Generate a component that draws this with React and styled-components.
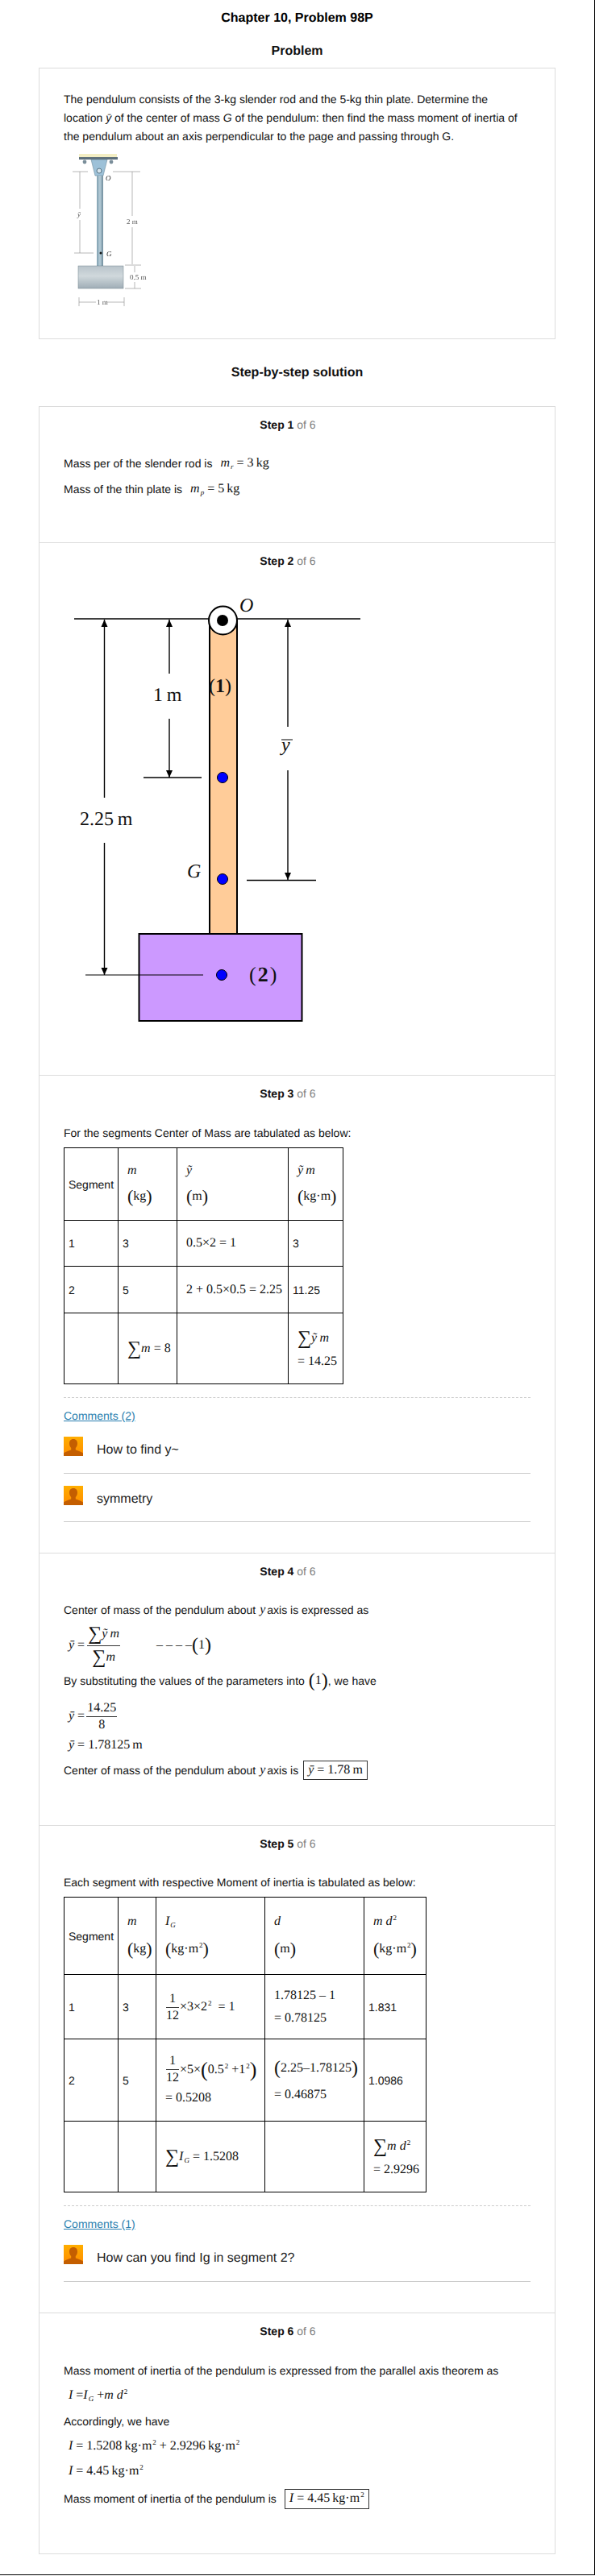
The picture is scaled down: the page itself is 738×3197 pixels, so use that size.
import React from 'react';
import styled, { createGlobalStyle } from 'styled-components';

const Global = createGlobalStyle`
  html, body { margin: 0; padding: 0; background: #fff; }
  body {
    font-family: "Liberation Sans", Arial, sans-serif;
    color: #111;
    text-rendering: geometricPrecision;
  }
`;

const Page = styled.div`
  box-sizing: border-box;
  width: 738px;
  height: 3196px;
  padding-top: 13px;
  border-right: 1px solid #000;
  border-bottom: 1px solid #000;
`;

const Title = styled.h1`
  margin: 0 0 21px;
  font-size: 16px;
  line-height: 20px;
  font-weight: 700;
  text-align: center;
  color: #000;
`;

const Heading = styled.h2`
  margin: ${p => p.$top || 0}px 0 ${p => p.$bottom || 0}px;
  font-size: 16px;
  line-height: 20px;
  font-weight: 700;
  text-align: center;
  color: #111;
`;

const Card = styled.section`
  box-sizing: border-box;
  width: 641px;
  margin-left: 48px;
  border: 1px solid #dcdcdc;
`;

const ProblemBody = styled.div`
  height: 335px;
  box-sizing: border-box;
  padding: 27px 30px 0;
  font-size: 14px;
  line-height: 23px;
  white-space: nowrap;
`;

const ProblemFigure = styled.svg`
  display: block;
  width: 100px;
  height: 200px;
  margin: 9px 0 0 9px;
  filter: blur(0.35px);
`;

const Step = styled.article`
  box-sizing: border-box;
  height: ${p => p.$h}px;
  padding-top: 12px;
  border-top: ${p => (p.$first ? 'none' : '1px solid #dcdcdc')};
`;

const StepLabel = styled.div`
  height: 20px;
  margin-bottom: 20px;
  padding-right: 23px;
  font-size: 14px;
  line-height: 20px;
  text-align: center;
  font-weight: 700;
  color: #111;

  span { font-weight: 400; color: #808080; }
`;

const StepBody = styled.div`
  padding-left: 30px;
  width: 579px;
`;

const Line = styled.div`
  display: flex;
  align-items: center;
  height: ${p => p.$h}px;
  font-size: 14px;
  white-space: pre;
`;

const M = styled.span`
  display: inline-flex;
  align-items: center;
  font-family: "Liberation Serif", "Times New Roman", serif;
  font-size: ${p => p.$size || 16}px;
  white-space: nowrap;
  margin-left: ${p => p.$left || 0}px;
  margin-right: ${p => p.$right || 0}px;
  color: #111;

  i { font-style: italic; }
`;

const Sup = styled.span`
  font-size: 9px;
  position: relative;
  top: -5px;
  margin-left: 1px;
`;

const Sub = styled.span`
  font-size: 9px;
  font-style: italic;
  position: relative;
  top: 4px;
  margin-left: 1px;
`;

const Big = styled.span`
  font-size: ${p => p.$size || 22}px;
  font-weight: 400;
  line-height: 1;
`;

const Frac = styled.span`
  display: inline-flex;
  flex-direction: column;
  align-items: center;
  margin: 0 ${p => p.$gap || 1}px;
  line-height: 1;
`;

const Num = styled.span`
  display: flex;
  align-items: center;
  justify-content: center;
  align-self: stretch;
  padding: 0 1px 2px;
  border-bottom: 1px solid #333;
`;

const Den = styled.span`
  display: flex;
  align-items: center;
  justify-content: center;
  padding-top: 2px;
`;

const Boxed = styled.span`
  display: inline-flex;
  align-items: center;
  height: ${p => p.$h}px;
  padding: 0 5px;
  margin-left: ${p => p.$left || 0}px;
  border: 1px solid #333;
  box-sizing: border-box;
`;

const Table = styled.table`
  border-collapse: collapse;
  table-layout: fixed;
  width: ${p => p.$w}px;
`;

const Td = styled.td`
  box-sizing: border-box;
  height: ${p => p.$h}px;
  width: ${p => p.$w}px;
  padding: 0 0 0 ${p => (p.$math ? 11 : 5)}px;
  border: 1px solid #000;
  font-size: 14px;
  vertical-align: middle;
  white-space: nowrap;
`;

const Stack = styled.div`
  display: flex;
  flex-direction: column;
  align-items: flex-start;
  gap: ${p => p.$gap || 10}px;
`;

const Dashed = styled.div`
  margin-top: 16px;
  border-top: 1px dashed #ccc;
`;

const CommentsLink = styled.a`
  display: block;
  margin-top: 12px;
  font-size: 14px;
  line-height: 20px;
  color: #2a7fb0;
  text-decoration: underline;
`;

const Comment = styled.div`
  display: flex;
  align-items: flex-start;
  gap: 17px;
  height: 62px;
  box-sizing: border-box;
  padding-top: 16px;
  border-bottom: 1px solid #ccc;
  font-size: 16px;
  color: #222;

  & + & { height: 60px; padding-top: 15px; }

  p { margin: 5px 0 0; line-height: 23px; }
`;

const Avatar = () => (
  <svg width="24" height="24" viewBox="0 0 24 24" style={{ flex: 'none', display: 'block' }}>
    <defs>
      <linearGradient id="av" x1="0" y1="0" x2="0" y2="1">
        <stop offset="0" stopColor="#ffae00" />
        <stop offset="1" stopColor="#ff8c00" />
      </linearGradient>
    </defs>
    <rect width="24" height="24" fill="url(#av)" />
    <path d="M12 3c3.4 0 5 2.4 5 5.4 0 2.4-1 4.4-2.2 5.6v2.6c2.8 1.2 7.2 2 9.2 3.9V24H0v-3.5c2-1.9 6.4-2.7 9.2-3.9V14C8 12.8 7 10.8 7 8.4 7 5.4 8.6 3 12 3z" fill="#c45e00" />
  </svg>
);

const Frame = styled.svg`
  display: block;
  width: 380px;
  height: 560px;

  text { font-family: "Liberation Serif", "Times New Roman", serif; fill: #111; }
`;

const Arrow = ({ x, y1, y2, gapA, gapB }) => (
  <g stroke="#000" strokeWidth="1.4">
    <line x1={x} y1={y1} x2={x} y2={gapA} />
    <line x1={x} y1={gapB} x2={x} y2={y2} />
    <polygon points={`${x},${y1} ${x - 4},${y1 + 9} ${x + 4},${y1 + 9}`} fill="#000" stroke="none" />
    <polygon points={`${x},${y2} ${x - 4},${y2 - 9} ${x + 4},${y2 - 9}`} fill="#000" stroke="none" />
  </g>
);

const PendulumDiagram = () => (
  <Frame viewBox="79 726 380 560">
    <line x1="92" y1="768" x2="447" y2="768" stroke="#000" strokeWidth="1.5" />
    <rect x="260" y="770" width="34" height="389" fill="#ffcc99" stroke="#000" strokeWidth="2" />
    <rect x="172.5" y="1159" width="202" height="108" fill="#cc99ff" stroke="#000" strokeWidth="2" />
    <circle cx="276.5" cy="770" r="17.5" fill="#fff" stroke="#000" strokeWidth="2" />
    <circle cx="276" cy="770" r="7" fill="#000" />
    <circle cx="276" cy="965" r="6.5" fill="#0000ff" stroke="#000" />
    <circle cx="276" cy="1091" r="6.5" fill="#0000ff" stroke="#000" />
    <circle cx="275" cy="1210" r="6.5" fill="#0000ff" stroke="#000" />
    <Arrow x={129.5} y1={769} y2={1210} gapA={990} gapB={1046} />
    <Arrow x={210} y1={769} y2={965} gapA={836} gapB={892} />
    <Arrow x={357} y1={769} y2={1092} gapA={902} gapB={956} />
    <line x1="106" y1="1210" x2="252" y2="1210" stroke="#000" strokeWidth="1.2" />
    <line x1="178" y1="965" x2="250" y2="965" stroke="#000" strokeWidth="1.5" />
    <line x1="306" y1="1092.5" x2="392" y2="1092.5" stroke="#000" strokeWidth="1.5" />
    <text x="99" y="1024" fontSize="24">2.25&#8201;m</text>
    <text x="190" y="870" fontSize="24">1&#8201;m</text>
    <text x="349" y="932" fontSize="24" fontStyle="italic">y</text>
    <line x1="349" y1="918" x2="363" y2="918" stroke="#000" />
    <text x="297" y="759" fontSize="24" fontStyle="italic">O</text>
    <text x="232" y="1089" fontSize="24" fontStyle="italic">G</text>
    <text x="259" y="859" fontSize="24">(<tspan fontWeight="700">1</tspan>)</text>
    <text x="309" y="1218" fontSize="26" letterSpacing="2">(<tspan fontWeight="700">2</tspan>)</text>
  </Frame>
);

const FigureProblem = () => (
  <ProblemFigure viewBox="88 190 100 200">
    <defs>
      <linearGradient id="rod" x1="0" y1="0" x2="1" y2="0">
        <stop offset="0" stopColor="#7f9fb0" />
        <stop offset="0.5" stopColor="#b6cdd8" />
        <stop offset="1" stopColor="#6f8c9c" />
      </linearGradient>
      <linearGradient id="plate" x1="0" y1="0" x2="0" y2="1">
        <stop offset="0" stopColor="#b9c4cb" />
        <stop offset="0.45" stopColor="#d0d8dc" />
        <stop offset="1" stopColor="#9fadb6" />
      </linearGradient>
    </defs>
    <rect x="98" y="191" width="47" height="4" fill="#f3eec4" />
    <rect x="98" y="195" width="48" height="3" fill="#5d6f7b" />
    <circle cx="105" cy="201" r="2.4" fill="#7a8e9a" />
    <circle cx="138" cy="201" r="2.4" fill="#7a8e9a" />
    <path d="M113 198h20l-5 20h-10z" fill="#9dc1d8" stroke="#6f8c9c" strokeWidth="0.6" />
    <circle cx="123" cy="212" r="3" fill="#d8e6ee" stroke="#55707f" />
    <rect x="120" y="218" width="8" height="112" fill="url(#rod)" />
    <rect x="97" y="330" width="56" height="28" fill="url(#plate)" stroke="#76868f" strokeWidth="0.5" />
    <g stroke="#888" strokeWidth="0.6" fill="none">
      <path d="M90 213h19M92 314h24M140 213h34M155 329h20M155 358h20" />
      <path d="M99 213v46M99 273v41M164 213v55M164 282v46M167 330v8M167 350v8" />
      <path d="M98 369v11M154 369v11M98 375h21M133 375h21" />
    </g>
    <circle cx="125" cy="314" r="1.5" fill="#111" />
    <g fontFamily="'Liberation Serif', serif" fontSize="9" fill="#555">
      <text x="96" y="269" fontStyle="italic">ȳ</text>
      <text x="157" y="278">2 m</text>
      <text x="161" y="347">0.5 m</text>
      <text x="120" y="378">1 m</text>
      <text x="131" y="224" fontStyle="italic" fill="#333">O</text>
      <text x="132" y="318" fontStyle="italic" fill="#333">G</text>
    </g>
  </ProblemFigure>
);

const Sigma = ({ size }) => <Big $size={size || 24}>∑</Big>;

const App = () => (
  <Page>
    <Global />
    <Title>Chapter 10, Problem 98P</Title>
    <Heading $bottom={10}>Problem</Heading>
    <Card>
      <ProblemBody>
        The pendulum consists of the 3-kg slender rod and the 5-kg thin plate. Determine the<br />
        location <em>ȳ</em> of the center of mass <em>G</em> of the pendulum: then find the mass moment of inertia of<br />
        the pendulum about an axis perpendicular to the page and passing through G.
        <FigureProblem />
      </ProblemBody>
    </Card>
    <Heading $top={32} $bottom={31}>Step-by-step solution</Heading>
    <Card>
      <Step $first $h={168}>
        <StepLabel>Step 1 <span>of 6</span></StepLabel>
        <StepBody>
          <Line $h={36}>Mass per of the slender rod is<M $left={10}><i>m</i><Sub>r</Sub>&nbsp;= 3&#8201;kg</M></Line>
          <Line $h={28}>Mass of the thin plate is<M $left={10}><i>m</i><Sub>p</Sub>&nbsp;= 5&#8201;kg</M></Line>
        </StepBody>
      </Step>
      <Step $h={661}>
        <StepLabel>Step 2 <span>of 6</span></StepLabel>
        <StepBody>
          <PendulumDiagram />
        </StepBody>
      </Step>
      <Step $h={593}>
        <StepLabel>Step 3 <span>of 6</span></StepLabel>
        <StepBody>
          <Line $h={37}>For the segments Center of Mass are tabulated as below:</Line>
          <Table $w={346}>
            <tbody>
              <tr>
                <Td $h={90} $w={67}>Segment</Td>
                <Td $h={90} $w={73} $math><Stack $gap={12}><M><i>m</i></M><M><Big>(</Big>kg<Big>)</Big></M></Stack></Td>
                <Td $h={90} $w={138} $math><Stack $gap={12}><M><i>ỹ</i></M><M><Big>(</Big>m<Big>)</Big></M></Stack></Td>
                <Td $h={90} $w={68} $math><Stack $gap={12}><M><i>ỹ&#8201;m</i></M><M><Big>(</Big>kg·m<Big>)</Big></M></Stack></Td>
              </tr>
              <tr>
                <Td $h={57}>1</Td>
                <Td $h={57}>3</Td>
                <Td $h={57} $math><M>0.5×2 = 1</M></Td>
                <Td $h={57}>3</Td>
              </tr>
              <tr>
                <Td $h={58}>2</Td>
                <Td $h={58}>5</Td>
                <Td $h={58} $math><M>2 + 0.5×0.5 = 2.25</M></Td>
                <Td $h={58}>11.25</Td>
              </tr>
              <tr>
                <Td $h={88} />
                <Td $h={88} $math><M><Sigma /><i>m</i>&nbsp;= 8</M></Td>
                <Td $h={88} />
                <Td $h={88} $math><Stack $gap={8}><M><Sigma /><i>ỹ&#8201;m</i></M><M>= 14.25</M></Stack></Td>
              </tr>
            </tbody>
          </Table>
          <Dashed />
          <CommentsLink href="#">Comments (2)</CommentsLink>
          <Comment><Avatar /><p>How to find y~</p></Comment>
          <Comment><Avatar /><p>symmetry</p></Comment>
        </StepBody>
      </Step>
      <Step $h={338}>
        <StepLabel>Step 4 <span>of 6</span></StepLabel>
        <StepBody>
          <Line $h={36}>Center of mass of the pendulum about<M $left={5} $right={2}><i>y</i></M>axis is expressed as</Line>
          <Line $h={52}>
            <M $left={6}><i>ȳ</i>&nbsp;=<Frac $gap={3}><Num><Sigma /><i>ỹ&#8201;m</i></Num><Den><Sigma /><i>m</i></Den></Frac></M>
            <M $left={42}>– – – –<Big $size={24}>(</Big>1<Big $size={24}>)</Big></M>
          </Line>
          <Line $h={36}>By substituting the values of the parameters into<M $left={5}><Big $size={24}>(</Big>1<Big $size={24}>)</Big></M>, we have</Line>
          <Line $h={52}><M $left={6}><i>ȳ</i>&nbsp;=<Frac $gap={2}><Num>14.25</Num><Den>8</Den></Frac></M></Line>
          <Line $h={20}><M $left={6}><i>ȳ</i>&nbsp;= 1.78125&#8201;m</M></Line>
          <Line $h={42}>Center of mass of the pendulum about<M $left={5} $right={2}><i>y</i></M>axis is<Boxed $h={24} $left={6}><M><i>ȳ</i>&nbsp;= 1.78&#8201;m</M></Boxed></Line>
        </StepBody>
      </Step>
      <Step $h={605}>
        <StepLabel>Step 5 <span>of 6</span></StepLabel>
        <StepBody>
          <Line $h={36}>Each segment with respective Moment of inertia is tabulated as below:</Line>
          <Table $w={449}>
            <tbody>
              <tr>
                <Td $h={96} $w={67}>Segment</Td>
                <Td $h={96} $w={47} $math><Stack $gap={14}><M><i>m</i></M><M><Big>(</Big>kg<Big>)</Big></M></Stack></Td>
                <Td $h={96} $w={135} $math><Stack $gap={14}><M><i>I</i><Sub>G</Sub></M><M><Big>(</Big>kg·m<Sup>2</Sup><Big>)</Big></M></Stack></Td>
                <Td $h={96} $w={123} $math><Stack $gap={14}><M><i>d</i></M><M><Big>(</Big>m<Big>)</Big></M></Stack></Td>
                <Td $h={96} $w={77} $math><Stack $gap={14}><M><i>m d</i><Sup>2</Sup></M><M><Big>(</Big>kg·m<Sup>2</Sup><Big>)</Big></M></Stack></Td>
              </tr>
              <tr>
                <Td $h={80}>1</Td>
                <Td $h={80}>3</Td>
                <Td $h={80} $math><M><Frac><Num>1</Num><Den>12</Den></Frac>×3×2<Sup>2</Sup>&nbsp;&nbsp;= 1</M></Td>
                <Td $h={80} $math><Stack $gap={10}><M>1.78125 – 1</M><M>= 0.78125</M></Stack></Td>
                <Td $h={80}>1.831</Td>
              </tr>
              <tr>
                <Td $h={102}>2</Td>
                <Td $h={102}>5</Td>
                <Td $h={102} $math><Stack $gap={8}><M><Frac><Num>1</Num><Den>12</Den></Frac>×5×<Big $size={26}>(</Big>0.5<Sup>2</Sup>&nbsp;+1<Sup>2</Sup><Big $size={26}>)</Big></M><M>= 0.5208</M></Stack></Td>
                <Td $h={102} $math><Stack $gap={12}><M><Big $size={24}>(</Big>2.25–1.78125<Big $size={24}>)</Big></M><M>= 0.46875</M></Stack></Td>
                <Td $h={102}>1.0986</Td>
              </tr>
              <tr>
                <Td $h={88} />
                <Td $h={88} />
                <Td $h={88} $math><M><Sigma /><i>I</i><Sub>G</Sub>&nbsp;= 1.5208</M></Td>
                <Td $h={88} />
                <Td $h={88} $math><Stack $gap={8}><M><Sigma /><i>m d</i><Sup>2</Sup></M><M>= 2.9296</M></Stack></Td>
              </tr>
            </tbody>
          </Table>
          <Dashed />
          <CommentsLink href="#">Comments (1)</CommentsLink>
          <Comment><Avatar /><p>How can you find Ig in segment 2?</p></Comment>
        </StepBody>
      </Step>
      <Step $h={299}>
        <StepLabel>Step 6 <span>of 6</span></StepLabel>
        <StepBody>
          <Line $h={38}>Mass moment of inertia of the pendulum is expressed from the parallel axis theorem as</Line>
          <Line $h={24}><M $left={6}><i>I</i>&nbsp;= <i>I</i><Sub>G</Sub>&nbsp;+ <i>m d</i><Sup>2</Sup></M></Line>
          <Line $h={40}>Accordingly, we have</Line>
          <Line $h={22}><M $left={6}><i>I</i>&nbsp;= 1.5208&#8201;kg·m<Sup>2</Sup>&nbsp;+ 2.9296&#8201;kg·m<Sup>2</Sup></M></Line>
          <Line $h={40}><M $left={6}><i>I</i>&nbsp;= 4.45&#8201;kg·m<Sup>2</Sup></M></Line>
          <Line $h={28}>Mass moment of inertia of the pendulum is<Boxed $h={25} $left={10}><M><i>I</i>&nbsp;= 4.45&#8201;kg·m<Sup>2</Sup></M></Boxed></Line>
        </StepBody>
      </Step>
    </Card>
  </Page>
);

export default App;
